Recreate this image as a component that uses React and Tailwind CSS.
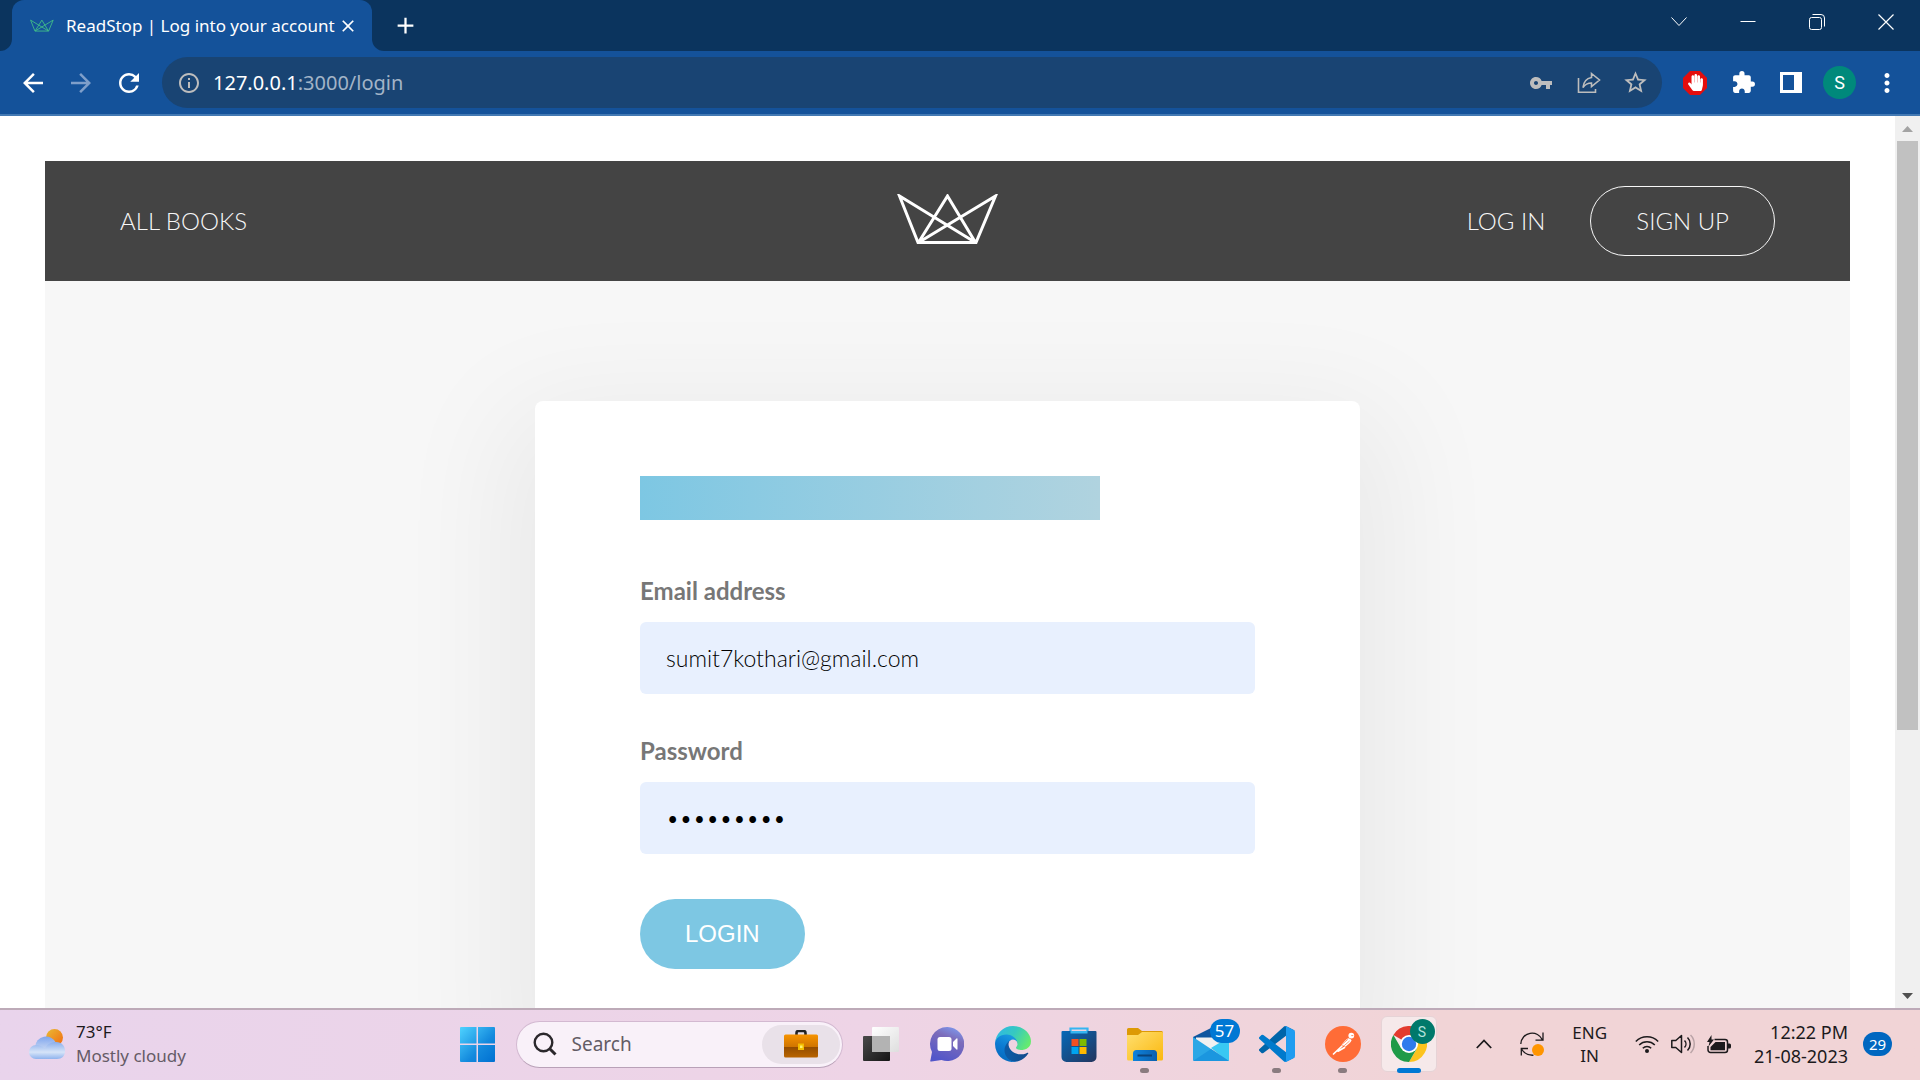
import React from "react";
import {
  MdArrowBack,
  MdArrowForward,
  MdRefresh,
  MdInfoOutline,
  MdVpnKey,
  MdStarOutline,
  MdExtension,
  MdMoreVert,
  MdClose,
  MdAdd,
} from "react-icons/md";
import { FaHandPaper } from "react-icons/fa";

const UI = "font-['Noto_Sans',sans-serif]";

function Crown({ className, width }) {
  return (
    <svg viewBox="0.5 2 102 54" className={className} fill="none" stroke="currentColor" strokeWidth={width} aria-hidden="true">
      <path d="M3 4 21.500 50.500H79.500L99 4 22 50.500 51 4 79 50.500Z" />
    </svg>
  );
}

function TabStrip() {
  return (
    <header className="flex h-[51px] shrink-0 items-stretch bg-[#0b345e] text-white">
      <div className="flex w-3 items-end bg-[#14529a]">
        <div className="h-full w-full rounded-br-[12px] bg-[#0b345e]" />
      </div>
      <div className="bg-[#0b345e]">
        <div className="flex h-full w-[360px] items-center rounded-t-[12px] bg-[#14529a] pl-[18px] pr-[14px]">
          <Crown className="h-[14px] w-6 text-[#3fb98a]" width={4} />
          <span className="ml-3 flex-1 whitespace-nowrap text-[17px]">ReadStop | Log into your account</span>
          <button type="button" aria-label="Close tab">
            <MdClose className="size-[20px]" />
          </button>
        </div>
      </div>
      <div className="w-3 bg-[#14529a]">
        <div className="h-full w-full rounded-bl-[12px] bg-[#0b345e]" />
      </div>
      <button type="button" aria-label="New tab" className="ml-2 flex items-center">
        <MdAdd className="size-[27px]" />
      </button>
      <div className="ml-auto flex">
        <button type="button" aria-label="Search tabs" className="flex w-[69px] items-start justify-center pt-[14px]">
          <svg viewBox="0 0 16 16" className="size-4" fill="none" stroke="currentColor" strokeWidth="1">
            <path d="M.5 3.500 8 11.500 15.500 3.500" />
          </svg>
        </button>
        <button type="button" aria-label="Minimize" className="flex w-[69px] items-start justify-center pt-[14px]">
          <svg viewBox="0 0 16 16" className="size-4" stroke="currentColor">
            <path d="M.5 7.500h15" />
          </svg>
        </button>
        <button type="button" aria-label="Restore" className="flex w-[69px] items-start justify-center pt-[14px]">
          <svg viewBox="0 0 16 16" className="size-4" fill="none" stroke="currentColor">
            <rect x=".5" y="3.500" width="12" height="12" rx="2" />
            <path d="M3.500.5H12a3.500 3.500 0 0 1 3.500 3.500v8.500" />
          </svg>
        </button>
        <button type="button" aria-label="Close window" className="flex w-[69px] items-start justify-center pt-[14px]">
          <svg viewBox="0 0 16 16" className="size-4" fill="none" stroke="currentColor" strokeWidth="1.200">
            <path d="m.5.5 15 15M15.500.5l-15 15" />
          </svg>
        </button>
      </div>
    </header>
  );
}

function Toolbar() {
  return (
    <div className="flex h-[65px] shrink-0 items-center border-b-2 border-[#4379b3] bg-[#14529a] pl-[18px] pr-[18px] text-white">
      <div className="flex gap-[18px]">
        <button type="button" aria-label="Back">
          <MdArrowBack className="size-[30px]" />
        </button>
        <button type="button" aria-label="Forward" className="text-[#7f9fca]">
          <MdArrowForward className="size-[30px]" />
        </button>
        <button type="button" aria-label="Reload">
          <MdRefresh className="size-[30px]" />
        </button>
      </div>
      <div className="ml-[18px] flex h-[51px] flex-1 items-center rounded-full bg-[#194473] pl-[15px] pr-[13px] text-[#bdbdbd]">
        <MdInfoOutline className="size-[24px]" />
        <div className="relative ml-3 flex h-full flex-1 items-center">
          <input
            type="text"
            aria-label="Address"
            defaultValue="127.0.0.1:3000/login"
            className="absolute inset-0 w-full bg-transparent text-[20px] text-transparent outline-none"
          />
          <span aria-hidden="true" className="pointer-events-none text-[20px] text-[#a3b4c7]">
            <span className="text-white">127.0.0.1</span>:3000/login
          </span>
        </div>
        <button type="button" aria-label="Passwords">
          <MdVpnKey className="size-6" />
        </button>
        <button type="button" aria-label="Share" className="ml-6">
          <svg viewBox="0 0 24 24" className="size-6" fill="none" stroke="currentColor" strokeWidth="1.600">
            <path d="M1.500 7v14.200h17V18M14.500 2.500 22.500 9l-8 6.500V12C10.500 12 8 13.500 6 16.500c.5-5.500 3.500-9 8.500-10z" />
          </svg>
        </button>
        <button type="button" aria-label="Bookmark" className="ml-[21px]">
          <MdStarOutline className="size-[27px]" />
        </button>
      </div>
      <div className="flex items-center pl-[21px]">
        <button type="button" aria-label="Ad blocker" className="relative flex size-6 items-center justify-center">
          <svg viewBox="0 0 24 24" className="absolute inset-0 size-6 text-[#e40d0d]" fill="currentColor">
            <path d="M7 0h10l7 7v10l-7 7H7l-7-7V7z" />
          </svg>
          <FaHandPaper className="relative size-[17px]" />
        </button>
        <button type="button" aria-label="Extensions" className="ml-6">
          <MdExtension className="size-[25px]" />
        </button>
        <button type="button" aria-label="Side panel" className="ml-6 flex">
          <svg viewBox="0 0 22 21" className="h-[21px] w-[22px]">
            <path d="M0 0h22v21H0z" fill="#fff" />
            <path d="M3 3h11v15H3z" fill="#14529a" />
          </svg>
        </button>
        <button type="button" aria-label="Profile" className="ml-[21px] flex size-[33px] items-center justify-center rounded-full bg-[#00897b] font-[Roboto,sans-serif] text-[18px]">
          S
        </button>
        <button type="button" aria-label="Menu" className="ml-4">
          <MdMoreVert className="size-[30px]" />
        </button>
      </div>
    </div>
  );
}

function Field({ id, label, type, value }) {
  return (
    <div className="flex flex-col">
      <label htmlFor={id} className="mb-4 text-[24px] leading-[30px] font-bold text-[#777]">
        {label}
      </label>
      <input
        id={id}
        type={type}
        defaultValue={value}
        className="h-[72px] w-full rounded-[6px] bg-[#e8f0fe] px-[26px] text-[23px] font-light text-black outline-none"
      />
    </div>
  );
}

function LoginPage() {
  return (
    <div className="min-w-0 flex-1 overflow-hidden bg-white p-[45px] pb-0 font-[Lato,sans-serif] text-[24px] font-light">
      <nav className="flex h-[120px] items-center bg-[#444] px-[75px] text-[#f7f7f7]">
        <div className="flex-1">
          <a href="#books">ALL BOOKS</a>
        </div>
        <Crown className="h-[54px] w-[102px] text-white" width={3} />
        <div className="flex flex-1 items-center justify-end gap-[45px]">
          <a href="#login">LOG IN</a>
          <a href="#signup" className="flex h-[70px] items-center rounded-full border border-current px-[45px]">
            SIGN UP
          </a>
        </div>
      </nav>
      <main className="relative overflow-hidden bg-[#f7f7f7] px-[90px] py-[120px]">
        <form
          className="mx-auto max-w-[825px] rounded-[8px] bg-white px-[105px] py-[75px] shadow-[0_38px_120px_30px_rgba(0,0,0,0.06)]"
          onSubmit={(event) => event.preventDefault()}
        >
          <h2
            aria-label="Log into your account"
            className="mb-14 h-11 w-[460px] bg-linear-to-r from-[#7dc7e3] to-[#b0d3df]"
          />
          <div className="flex flex-col gap-[42px]">
            <Field id="email" label="Email address" type="email" value="sumit7kothari@gmail.com" />
            <Field id="password" label="Password" type="password" value="readstop9" />
          </div>
          <button
            type="submit"
            className="mt-[45px] h-[70px] rounded-full bg-[#7dc7e3] px-[45px] font-['Liberation_Sans',sans-serif] text-[24px] font-normal text-white"
          >
            LOGIN
          </button>
        </form>
      </main>
    </div>
  );
}

function ScrollBar() {
  return (
    <div className="flex w-[25px] shrink-0 flex-col items-center bg-[#f0f0f0]">
      <svg viewBox="0 0 25 25" className="size-[25px] shrink-0" fill="#a3a3a3">
        <path d="m12.500 10 5.500 6H7z" />
      </svg>
      <div className="w-full flex-1 px-0.5">
        <div className="h-[70%] bg-[#c1c1c1]" />
      </div>
      <svg viewBox="0 0 25 25" className="size-[25px] shrink-0" fill="#505050">
        <path d="m12.500 16 5.500-6H7z" />
      </svg>
    </div>
  );
}

function WeatherIcon() {
  return (
    <svg viewBox="0 0 36 30" className="h-[30px] w-9">
      <defs>
        <linearGradient id="sun" x1="0" y1="0" x2="1" y2="1">
          <stop stopColor="#e9bb35" />
          <stop offset="1" stopColor="#f26a10" />
        </linearGradient>
        <linearGradient id="cloudBack" x1="0" y1="0" x2="0" y2="1">
          <stop stopColor="#7fa6ee" />
          <stop offset=".6" stopColor="#bccff2" />
        </linearGradient>
        <linearGradient id="cloudFront" x1="0" y1="0" x2="0" y2="1">
          <stop stopColor="#8aaeec" />
          <stop offset=".6" stopColor="#d6e4f8" />
          <stop offset="1" stopColor="#8fb3ee" />
        </linearGradient>
      </defs>
      <circle cx="25.500" cy="8.500" r="8.500" fill="url(#sun)" />
      <path d="M6 18a11 11 0 0 1 21-4l-4 12H8z" fill="url(#cloudBack)" />
      <path d="M7 30a7 7 0 0 1 0-14c4 0 6 1 9 4 2-5 6-7 11-7 6 0 9 4 9 9s-3 8-8 8z" fill="url(#cloudFront)" />
    </svg>
  );
}

function StartIcon() {
  return (
    <svg viewBox="0 0 35 35" className="size-[35px]">
      <defs>
        <linearGradient id="win" x1="0" y1="0" x2="1" y2="1">
          <stop stopColor="#4fd3ff" />
          <stop offset=".6" stopColor="#1389dd" />
          <stop offset="1" stopColor="#0070d1" />
        </linearGradient>
      </defs>
      <path d="M1 0h15.500v16.500H0V1a1 1 0 0 1 1-1zM18 0h16a1 1 0 0 1 1 1v15.500H18zM0 18h16.500v17H1a1 1 0 0 1-1-1zM18 18h17v16a1 1 0 0 1-1 1H18z" fill="url(#win)" />
    </svg>
  );
}

function BriefcaseIcon() {
  return (
    <svg viewBox="0 0 34 28" className="h-7 w-[34px]">
      <defs>
        <linearGradient id="caseTop" x1="0" y1="0" x2="0" y2="1">
          <stop stopColor="#f79400" />
          <stop offset="1" stopColor="#cf7400" />
        </linearGradient>
        <linearGradient id="caseLow" x1="0" y1="0" x2="0" y2="1">
          <stop stopColor="#8f4a00" />
          <stop offset="1" stopColor="#b96400" />
        </linearGradient>
      </defs>
      <path d="M12.500 5V3a2 2 0 0 1 2-2h5a2 2 0 0 1 2 2v2" fill="none" stroke="#222" strokeWidth="2.600" />
      <path d="M0 16h34v10a1.500 1.500 0 0 1-1.500 1.500h-31A1.500 1.500 0 0 1 0 26z" fill="url(#caseLow)" />
      <path d="M1.500 4.500h31A1.500 1.500 0 0 1 34 6v11H0V6a1.500 1.500 0 0 1 1.500-1.500z" fill="url(#caseTop)" />
      <path d="M14 13.500h6v6.500h-6z" fill="#f4bd00" />
      <path d="M16 15.500h2.500V18H16z" fill="#fff06a" />
    </svg>
  );
}

function TaskViewIcon() {
  return (
    <svg viewBox="0 0 36 34" className="h-[34px] w-9">
      <defs>
        <linearGradient id="tvBack" x1="0" y1="0" x2="1" y2="1">
          <stop stopColor="#4a4a4a" />
          <stop offset="1" stopColor="#151515" />
        </linearGradient>
        <linearGradient id="tvFront" x1="0" y1="0" x2="1" y2="1">
          <stop stopColor="#fff" />
          <stop offset="1" stopColor="#dedede" />
        </linearGradient>
      </defs>
      <rect y="9" width="27" height="25" rx="1" fill="url(#tvBack)" />
      <rect x="9" width="27" height="25" rx="1" fill="url(#tvFront)" />
      <path d="M9 9h18v16H9z" fill="#b3b3b3" />
    </svg>
  );
}

function ChatIcon() {
  return (
    <svg viewBox="0 0 34 35" className="h-[35px] w-[34px]">
      <defs>
        <linearGradient id="chat" x1=".8" y1="0" x2=".4" y2="1">
          <stop stopColor="#7d9bf0" />
          <stop offset=".35" stopColor="#7c6cba" />
          <stop offset="1" stopColor="#5256c9" />
        </linearGradient>
      </defs>
      <path d="M17 0a17 17 0 1 1-5.500 33L1.500 34.500C0 34.500 0 34 .5 33L2 25A17 17 0 0 1 17 0z" fill="url(#chat)" />
      <rect x="7.500" y="10" width="14" height="14" rx="2.500" fill="#fff" />
      <path d="m23 15 3.500-3.500c.6-.5 1-.2 1 .5v10c0 .7-.4 1-1 .5L23 19z" fill="#fff" />
    </svg>
  );
}

function EdgeIcon() {
  return (
    <svg viewBox="0 0 256 256" className="size-9">
      <defs>
        <linearGradient id="edgeA" x1=".2" y1="0" x2="1" y2="0">
          <stop stopColor="#0c59a4" />
          <stop offset="1" stopColor="#114a8b" />
        </linearGradient>
        <linearGradient id="edgeB" x1=".6" y1="0" x2=".2" y2="1">
          <stop stopColor="#1b9de2" />
          <stop offset=".5" stopColor="#0b7ad2" />
          <stop offset="1" stopColor="#0667ba" />
        </linearGradient>
        <linearGradient id="edgeC" x1="0" y1=".2" x2="1" y2=".6">
          <stop stopColor="#2fb8e6" />
          <stop offset=".5" stopColor="#36c9c0" />
          <stop offset="1" stopColor="#66eb6e" />
        </linearGradient>
      </defs>
      <path fill="url(#edgeA)" d="M231 190.500c-3.400 1.800-6.900 3.400-10.500 4.700a101.800 101.800 0 0 1-35.900 6.500c-47.300 0-88.500-32.600-88.500-74.300a31.500 31.500 0 0 1 16.400-27.300c-42.800 1.800-53.800 46.400-53.800 72.500 0 74 68.100 81.400 82.800 81.400 7.900 0 19.800-2.300 27-4.600l1.300-.4a128.300 128.300 0 0 0 66.600-52.800 4 4 0 0 0-5.400-5.700z" />
      <path fill="url(#edgeB)" d="M105.700 241.400a79.200 79.200 0 0 1-22.700-21.300 80.700 80.700 0 0 1 29.500-120c3.200-1.500 8.500-4.100 15.600-4a32.400 32.400 0 0 1 25.700 13 31.900 31.900 0 0 1 6.300 18.700c0-.2 24.500-79.600-80-79.600-43.900 0-80 41.600-80 78.200a130.200 130.200 0 0 0 12.100 56 128 128 0 0 0 156.400 67 75.500 75.500 0 0 1-62.800-8z" />
      <path fill="url(#edgeC)" d="M152.300 148.900c-.9 1-3.400 2.500-3.400 5.600 0 2.600 1.700 5.100 4.800 7.200 14.300 10 41.400 8.600 41.500 8.600a59.600 59.600 0 0 0 30.300-8.300 61.400 61.400 0 0 0 30.400-52.900c.3-22.400-8-37.300-11.300-43.900C223.500 23.900 177.700 0 128 0A128 128 0 0 0 0 126.200c.5-36.500 36.800-66 80-66 3.500 0 23.500.3 42 10.100 16.300 8.600 24.900 19 30.800 29.200 6.200 10.700 7.300 24.200 7.300 29.500s-2.700 13.300-7.800 19.900z" />
    </svg>
  );
}

function StoreIcon() {
  return (
    <svg viewBox="0 0 36 35" className="h-[35px] w-9">
      <defs>
        <linearGradient id="store" x1="0" y1="0" x2="1" y2="1">
          <stop stopColor="#0669b8" />
          <stop offset="1" stopColor="#23355d" />
        </linearGradient>
      </defs>
      <path d="M9.500 7V1.500h17V7" fill="none" stroke="#35b5f1" strokeWidth="2.200" />
      <path d="M1.500 4h33a1 1 0 0 1 1 1v25a5 5 0 0 1-5 5h-25a5 5 0 0 1-5-5V5a1 1 0 0 1 1-1z" fill="url(#store)" />
      <path d="M9.500 4h17v2.500h-17z" fill="#35b5f1" />
      <path d="M10.500 12h7v7h-7z" fill="#f25022" />
      <path d="M18.500 12h7v7h-7z" fill="#7fba00" />
      <path d="M10.500 20h7v7h-7z" fill="#00a4ef" />
      <path d="M18.500 20h7v7h-7z" fill="#ffb900" />
    </svg>
  );
}

function FolderIcon() {
  return (
    <svg viewBox="0 0 36 33" className="h-[33px] w-9">
      <defs>
        <linearGradient id="folder" x1="0" y1="0" x2="1" y2="1">
          <stop stopColor="#ffdf70" />
          <stop offset="1" stopColor="#fbb80e" />
        </linearGradient>
        <linearGradient id="folderTray" x1="0" y1="0" x2="1" y2="0">
          <stop stopColor="#0f83dc" />
          <stop offset="1" stopColor="#0b60ad" />
        </linearGradient>
      </defs>
      <path d="M0 1.500A1.500 1.500 0 0 1 1.500 0H11l4 3h19.500A1.500 1.500 0 0 1 36 4.500V14H0z" fill="#dd9a05" />
      <path d="M0 7h11l4-3h20a1 1 0 0 1 1 1v26a1.500 1.500 0 0 1-1.500 1.500h-33A1.500 1.500 0 0 1 0 31z" fill="url(#folder)" />
      <path d="M6 33v-7.500a3.500 3.500 0 0 1 3.500-3.500h17a3.500 3.500 0 0 1 3.500 3.500V33z" fill="url(#folderTray)" />
      <path d="M10.500 27.500h14.500" stroke="#0a4379" strokeWidth="2" />
    </svg>
  );
}

function MailIcon() {
  return (
    <svg viewBox="0 0 36 33" className="h-[33px] w-9">
      <path d="M0 9 18 0l18 9v9H0z" fill="#0f569f" />
      <path d="M3 9.500h30V18L18 22 3 12z" fill="#f1f1f1" />
      <path d="M36 9v22.500a1.500 1.500 0 0 1-1.500 1.500L18 20z" fill="#39c8f3" />
      <path d="M0 9 36 33H1.500A1.500 1.500 0 0 1 0 31.500z" fill="#2aa7e6" />
      <path d="m0 33 18-12 18 12z" fill="#1b96df" />
    </svg>
  );
}

function VsCodeIcon() {
  return (
    <svg viewBox="0 0 100 100" className="size-9">
      <path fill="#0065a9" d="M96.460 10.800 75.860.88A6.200 6.200 0 0 0 68.750 2.080L1.300 63.580a4.170 4.170 0 0 0 0 6.170l5.510 5a4.170 4.170 0 0 0 5.320.24l81.230-61.620A4.160 4.160 0 0 1 100 16.670v-.24a6.250 6.250 0 0 0-3.540-5.630z" />
      <path fill="#007acc" d="M96.460 89.200 75.860 99.120a6.200 6.200 0 0 1-7.110-1.200L1.300 36.420a4.170 4.170 0 0 1 0-6.170l5.510-5a4.170 4.170 0 0 1 5.320-.24l81.230 61.620A4.160 4.160 0 0 0 100 83.330v.24a6.250 6.250 0 0 1-3.540 5.630z" />
      <path fill="#1f9cf0" d="M75.860 99.130a6.200 6.200 0 0 1-7.110-1.210C71.060 100.220 75 98.590 75 95.330V4.670c0-3.260-3.940-4.890-6.250-2.590A6.200 6.200 0 0 1 75.860.87l20.600 9.910A6.250 6.250 0 0 1 100 16.410v67.180a6.250 6.250 0 0 1-3.540 5.630z" />
    </svg>
  );
}

function PostmanIcon() {
  return (
    <svg viewBox="0 0 36 36" className="size-9">
      <circle cx="18" cy="18" r="18" fill="#ff6c37" />
      <circle cx="26.300" cy="9.600" r="2.900" fill="#fff" />
      <path d="M26.300 9.600h2" stroke="#ff6c37" strokeWidth=".8" />
      <path d="M23 12.200c1.800.2 3.200 1 3.600 2.300-1.200 2.200-3.800 4.300-6.300 6.300l-3.600-2.300c2-2.600 4-5 6.300-6.300z" fill="#fff" />
      <path d="m17.200 18.200 5.600-4.800M18.800 20l5.800-5" stroke="#ff6c37" strokeWidth=".7" />
      <path d="M17 20 8.500 28M19.500 21.500l-6.500 3.700" stroke="#fff" strokeWidth="1.700" strokeLinecap="round" />
    </svg>
  );
}

function ChromeIcon() {
  return (
    <svg viewBox="0 0 36 36" className="size-9">
      <path d="M18 18 2.400 9A18 18 0 0 1 33.600 9z" fill="#e33b2e" />
      <path d="M18 9h15.600A18 18 0 0 1 18 36l8-13.500z" fill="#fcc31e" />
      <path d="M2.400 9A18 18 0 0 0 18 36l7.800-13.500L10.200 22.500z" fill="#1f9a48" />
      <path d="M2.400 9h31.200H18z" fill="#e33b2e" />
      <circle cx="18" cy="18" r="9" fill="#fff" />
      <circle cx="18" cy="18" r="7.200" fill="#2f7bed" />
    </svg>
  );
}

function TaskApp({ label, running, active, badge, children }) {
  return (
    <button type="button" aria-label={label} className="relative flex h-full w-[66px] items-center justify-center">
      {active && <span className="absolute inset-x-[5px] top-[6px] bottom-[6px] rounded-[6px] border border-[#e6d3d6] bg-[#f6e9ea]" />}
      <span className="relative">{children}</span>
      {badge}
      {running && <span className="absolute bottom-[5px] h-[5px] w-[9px] rounded-full bg-[#8a7b7f]" />}
      {active && <span className="absolute bottom-[5px] h-[5px] w-6 rounded-full bg-[#0078d4]" />}
    </button>
  );
}

function Taskbar() {
  return (
    <footer className="flex h-[72px] shrink-0 items-center border-t-2 border-[#bdaab8] bg-linear-to-r from-[#e9d4ec] via-[#eed4e6] via-45% to-[#f1d4d6] to-75% pb-0.5 text-[18px] leading-6 text-[#1c1a1c]">
      <button type="button" aria-label="Weather" className="flex flex-1 items-center gap-[11px] pl-[29px] text-left text-[17px]">
        <WeatherIcon />
        <span className="flex flex-col">
          <span>73°F</span>
          <span className="text-[#655b66]">Mostly cloudy</span>
        </span>
      </button>

      <div className="mr-5 flex h-full items-center">
        <button type="button" aria-label="Start" className="mr-[21px]">
          <StartIcon />
        </button>
        <div className="mr-[5px] flex h-[47px] w-[327px] items-center rounded-full border border-[#d3b9d1] border-b-[#b9a1b8] bg-[#f9f1f9] pl-4 pr-0.5">
          <svg viewBox="0 0 24 24" className="size-6" fill="none" stroke="#2b282c" strokeWidth="2.400">
            <circle cx="10.500" cy="10.500" r="8.800" />
            <path d="m16.500 16.500 6 6" strokeWidth="3" />
          </svg>
          <input
            type="text"
            aria-label="Search"
            placeholder="Search"
            className="ml-[15px] w-0 flex-1 bg-transparent text-[19px] outline-none placeholder:text-[#635c65]"
          />
          <span className="flex h-[39px] w-[78px] items-center justify-center rounded-full bg-[#e9e1e9]">
            <BriefcaseIcon />
          </span>
        </div>
        <TaskApp label="Task view"><TaskViewIcon /></TaskApp>
        <TaskApp label="Chat"><ChatIcon /></TaskApp>
        <TaskApp label="Edge"><EdgeIcon /></TaskApp>
        <TaskApp label="Store"><StoreIcon /></TaskApp>
        <TaskApp label="File Explorer" running><FolderIcon /></TaskApp>
        <TaskApp
          label="Mail"
          badge={<span className="absolute top-[9px] right-[4px] flex h-6 w-[30px] items-center justify-center rounded-full bg-[#0078d4] text-[17px] text-white">57</span>}
        >
          <MailIcon />
        </TaskApp>
        <TaskApp label="Visual Studio Code" running><VsCodeIcon /></TaskApp>
        <TaskApp label="Postman" running><PostmanIcon /></TaskApp>
        <TaskApp
          label="Chrome"
          active
          badge={<span className="absolute top-[9px] right-[7px] flex size-[25px] items-center justify-center rounded-full bg-[#00796b] font-[Roboto,sans-serif] text-[14px] text-[#b5e3dc]">S</span>}
        >
          <ChromeIcon />
        </TaskApp>
      </div>

      <div className="flex flex-1 items-center justify-end pr-7">
        <button type="button" aria-label="Show hidden icons">
          <svg viewBox="0 0 16 10" className="h-[10px] w-4" fill="none" stroke="currentColor" strokeWidth="1.800">
            <path d="m.8 9 7.200-7.500L15.200 9" />
          </svg>
        </button>
        <button type="button" aria-label="Updates" className="ml-7">
          <svg viewBox="0 0 24 24" className="size-6" fill="none" stroke="currentColor" strokeWidth="1.300">
            <path d="M.8 12A11.300 11.300 0 0 1 22.500 8M23 .5V8.200h-7.500M1.300 23.500V16.500H8M1.500 17c2.500 4.300 6.500 6.500 12 6.200" />
            <circle cx="18" cy="18" r="6" fill="#ff9500" stroke="none" />
          </svg>
        </button>
        <button type="button" aria-label="Language" className="ml-7 text-center text-[17px] leading-[23px]">
          ENG
          <br />
          IN
        </button>
        <button type="button" aria-label="Network, volume and battery" className="ml-7 flex items-center gap-3">
          <svg viewBox="0 0 24 18" className="h-[18px] w-6" fill="none" stroke="currentColor" strokeWidth="1.500">
            <path d="M.8 6.500a15.800 15.800 0 0 1 22.400 0M4.200 10a11 11 0 0 1 15.600 0M7.800 13.300a6 6 0 0 1 8.400 0" />
            <circle cx="12" cy="16" r="2" fill="currentColor" stroke="none" />
          </svg>
          <svg viewBox="0 0 24 20" className="h-5 w-6" fill="none" stroke="currentColor" strokeWidth="1.500">
            <path d="M.8 6.500h4L10.500 1.500v17L4.800 13.500h-4z" strokeLinejoin="round" />
            <path d="M13.500 6.500a5 5 0 0 1 0 7M16.500 3.500a9.200 9.200 0 0 1 0 13" />
            <path d="M19.500 1a12.700 12.700 0 0 1 0 18" stroke="#b9a3a6" />
          </svg>
          <svg viewBox="0 0 24 19" className="h-[19px] w-6" fill="none" stroke="currentColor" strokeWidth="1.500">
            <path d="M7.500 4.500H18a2.500 2.500 0 0 1 2.500 2.500v8a2.500 2.500 0 0 1-2.500 2.500H3.500A2.500 2.500 0 0 1 1 15v-4" />
            <path d="M8.500 7H18v8.200H3.500V12z" fill="currentColor" stroke="none" />
            <path d="M21 8.500h1.500a1.500 1.500 0 0 1 1.500 1.500v2a1.500 1.500 0 0 1-1.500 1.500H21zM4.500 0 0 7h2.500L1.500 11.500 7 4.500H4.500z" fill="currentColor" stroke="none" />
          </svg>
        </button>
        <button type="button" aria-label="Date and time" className="ml-[23px] flex flex-col items-end">
          <span>12:22 PM</span>
          <span>21-08-2023</span>
        </button>
        <button type="button" aria-label="Notifications" className="ml-[15px] flex h-6 w-[29px] items-center justify-center rounded-full bg-[#0067c0] text-[15px] text-white">
          29
        </button>
      </div>
    </footer>
  );
}

export default function App() {
  return (
    <div className={`flex h-screen flex-col overflow-hidden ${UI}`}>
      <TabStrip />
      <Toolbar />
      <div className="flex min-h-0 flex-1">
        <LoginPage />
        <ScrollBar />
      </div>
      <Taskbar />
    </div>
  );
}
